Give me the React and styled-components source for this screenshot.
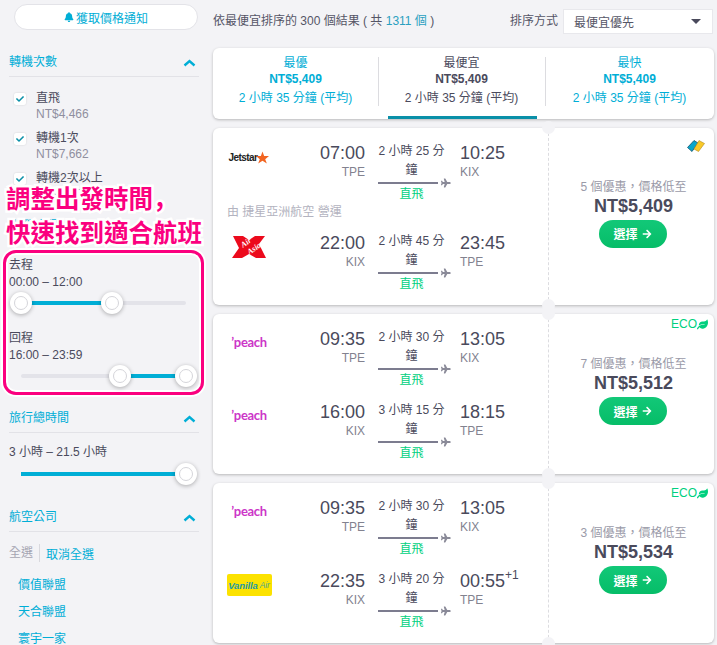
import React from 'react';
import styled, { createGlobalStyle } from 'styled-components';
import { FaBell, FaCheck, FaArrowRight, FaLeaf, FaPlane } from 'react-icons/fa';

const Global = createGlobalStyle`
  html, body { margin: 0; padding: 0; background: #f3f3f6; }
  body { font-family: "Liberation Sans", "Noto Sans CJK TC", sans-serif; font-size: 12px; color: #4a4a5c; }
  #root { height: 645px; overflow: hidden; }
`;

const BLUE = '#00aed6';
const PINK = '#fb007f';
const Page = styled.div`display: flex; position: relative; height: 645px; overflow: hidden; background: #f3f3f6;`;
const Sidebar = styled.aside`width: 190px; margin-left: 9px; padding-top: 4px; flex: none;`;
const AlertButton = styled.div`
  margin-left: 5px; width: 182px; height: 24px; border: 1px solid #e3e3e8; border-radius: 13px; background: #fff;
  color: ${BLUE}; display: flex; align-items: center; justify-content: center; gap: 2px; font-size: 12px;
  svg { width: 10px; height: 10px; }
`;
const SectionHead = styled.div`
  height: 28px; margin-top: ${p => p.$mt}px; border-bottom: 1px solid #e2e2e7; color: ${BLUE}; display: flex;
  justify-content: space-between; font-size: 12px; line-height: 29px; padding-right: 3px;
`;
const Chevron = () => (
  <svg width="13" height="8" viewBox="0 0 13 8" style={{ marginTop: 11 }}>
    <path d="M1.5 6.5 L6.5 2 L11.5 6.5" fill="none" stroke={BLUE} strokeWidth="2.4" />
  </svg>
);
const StopList = styled.div`padding-top: 11px;`;
const StopItem = styled.div`height: 40px; display: flex; padding-left: 5px; line-height: 17px;`;
const CheckBox = styled.span`
  width: 12px; height: 12px; margin: 5px 10px 0 0; background: #fff; border-radius: 2px; color: #0a90a8; flex: none;
  display: flex; align-items: center; justify-content: center; box-shadow: 0 0 2px rgba(0,0,0,.15);
  svg { width: 8px; height: 8px; }
`;
const StopLabel = styled.div`font-size: 12px; color: #4a4a5c; margin-top: 2px;`;
const Muted = styled.div`color: #8f8f9f; font-size: 12px; margin-top: -1px;`;
const Highlight = styled.div`
  margin: 9px -5px 0 -6px; border: 3px solid ${PINK}; border-radius: 13px; padding: 2px 0 5px 3px;
  box-shadow: 0 0 0 2px #fff, inset 0 0 0 2px #fff;
`;
const SliderLabel = styled.div`line-height: 17px; font-size: 12px; color: #4a4a5c; margin-top: ${p => p.$mt || 0}px;`;
const SliderTitle = styled.div`line-height: 17px; font-size: 12px; color: #4a4a5c; margin-top: ${p => p.$mt || 2}px; margin-bottom: -2px;`;
const SliderWrap = styled.div`
  position: relative; height: 22px; width: 165px; margin: ${p => p.$mt}px 0 0 12px;
`;
const Track = styled.div`position: absolute; left: 0; right: 0; top: 9px; height: 4px; background: #e3e3e9; border-radius: 2px;`;
const Fill = styled.div`
  position: absolute; top: 9px; height: 4px; background: ${BLUE}; left: ${p => p.$from}%; width: ${p => p.$to - p.$from}%;
`;
const Knob = styled.div`
  position: absolute; top: 0; left: ${p => p.$at}%; width: 22px; height: 22px; margin-left: -11px; border-radius: 50%; background: #fff;
  box-shadow: 0 1px 4px rgba(0,0,0,.3); display: flex; align-items: center; justify-content: center;
  &::after { content: ""; width: 14px; height: 14px; border: 1px solid #d5d5da; border-radius: 50%; box-sizing: border-box; }
`;
const Slider = ({ from, to, single, mt = 2 }) => (
  <SliderWrap $mt={mt}>
    <Track /><Fill $from={from} $to={to} />
    {!single && <Knob $at={from} />}<Knob $at={to} />
  </SliderWrap>
);
const AirlineTools = styled.div`display: flex; align-items: center; margin-top: 12px; font-size: 12px; color: ${BLUE};`;
const SelectAll = styled.span`color: #a5a5b2; padding-right: 6px; margin-right: 6px; border-right: 1px solid #d9d9de; line-height: 18px;`;
const AllianceList = styled.div`margin-top: 10px;`;
const AllianceLink = styled.div`color: ${BLUE}; font-size: 12px; padding-left: 9px; line-height: 27px;`;
const Overlay = styled.div`
  position: absolute; left: 6px; top: 181px; font-size: 24.5px; line-height: 34px; font-weight: 700; color: ${PINK}; white-space: nowrap;
  -webkit-text-stroke: 5px #fff; paint-order: stroke fill;
`;
const LowComma = styled.span`font-family: "Noto Sans CJK SC", sans-serif;`;

const Main = styled.main`width: 501px; margin-left: 14px; flex: none;`;
const TopBar = styled.div`height: 48px; display: flex; align-items: flex-start;`;
const ResultCount = styled.div`margin-top: 13px; line-height: 17px; width: 297px; white-space: nowrap; color: #555566;`;
const Accent = styled.span`color: #2a9fc0;`;
const SortLabel = styled.div`margin-top: 13px; line-height: 17px; width: 53px; white-space: nowrap; color: #555566;`;
const Select = styled.div`
  margin-top: 9px; width: 150px; height: 25px; background: #fff; border: 1px solid #e8e8ec; box-sizing: border-box;
  display: flex; align-items: center; justify-content: space-between; padding: 0 11px 0 10px; color: #555566;
  &::after { content: ""; border: 5px solid transparent; border-top: 5px solid #4a4a5c; border-bottom: 0; }
`;
const Tabs = styled.div`
  display: grid; grid-template-columns: 165px 167px 1fr; height: 71px; background: #fff; border-radius: 6px; box-shadow: 0 1px 3px rgba(0,0,0,.25);
`;
const Tab = styled.div`
  position: relative; text-align: center; color: ${p => (p.$active ? '#4a4a5c' : BLUE)}; padding-top: 7px;
  &::before { content: ""; display: ${p => (p.$divider ? 'block' : 'none')}; position: absolute; left: 0; top: 9px; height: 49px; width: 1px; background: #dcdce0; }
  &::after { content: ""; display: ${p => (p.$active ? 'block' : 'none')}; position: absolute; left: 10px; right: 8px; bottom: 0; height: 3px; background: #0a90a8; }
`;
const TabLine = styled.div`line-height: ${p => p.$lh}px; font-weight: ${p => (p.$bold ? 700 : 400)};`;

const Card = styled.section`
  display: flex; height: ${p => p.$h}px; margin-top: 9px; background: #fff; border-radius: 6px; box-shadow: 0 1px 3px rgba(0,0,0,.25);
`;
const LegsPane = styled.div`flex: none; width: 335px; padding: 14px 0 0 14px; box-sizing: border-box;`;
const PricePane = styled.div`
  flex: 1; position: relative; border-left: 1px dashed #dcdce0; display: flex; flex-direction: column; align-items: center; justify-content: center; padding: 0 0 8px 4px;
  &::before, &::after { content: ""; position: absolute; left: -7px; width: 13px; height: 13px; border-radius: 50%; background: #f3f3f6; }
  &::before { top: -7px; } &::after { bottom: -7px; }
`;
const Leg = styled.div`display: flex; height: 60px; margin-bottom: ${p => p.$mb || 0}px;`;
const LogoCell = styled.div`width: 44px; height: 30px; margin-right: 34px; display: flex; align-items: center; justify-content: center; flex: none;`;
const TimeCol = styled.div`width: ${p => p.$w}px; flex: none; text-align: ${p => p.$align};`;
const Time = styled.div`font-size: 18px; line-height: 22px; color: #4a4a5c; white-space: nowrap;`;
const Plus = styled.sup`font-size: 12px; line-height: 0; position: relative; top: -1px;`;
const Airport = styled.div`font-size: 12px; line-height: 17px; color: #82828f;`;
const DurationCol = styled.div`width: 73px; margin: 0 9px 0 13px; flex: none;`;
const DurationText = styled.div`width: 67px; text-align: center; font-size: 12px; line-height: 19px; color: #4a4a5c;`;
const LineRow = styled.div`display: flex; align-items: center; height: 8px; margin-top: -1px; color: #8a8a98; svg { width: 10px; height: 10px; margin-left: 3px; }`;
const Line = styled.div`width: 61px; height: 2px; background: #7c7c8f;`;
const Direct = styled.div`width: 67px; text-align: center; color: #00d07e; font-size: 12px; line-height: 15px;`;
const Operated = styled.div`color: #b3b3c0; font-size: 12px; line-height: 18px; margin: 1px 0 11px;`;
const Offer = styled.div`font-size: 12px; line-height: 17px; color: #9a9aa8; margin-top: 1px;`;
const Price = styled.div`font-size: 18px; font-weight: 700; line-height: 20px; color: #4a4a5c;`;
const SelectButton = styled.div`
  width: 68px; height: 28px; margin-top: 4px; margin-left: -2px; border-radius: 14px; background: linear-gradient(#12c878, #06bd68); color: #fff; font-weight: 700; font-size: 12px;
  display: flex; align-items: center; justify-content: center; gap: 4px; svg { width: 10px; height: 10px; }
`;
const Eco = styled.div`
  position: absolute; top: 3px; right: 6px; color: #00d07e; font-size: 12px; line-height: 14px; display: flex; align-items: center;
  svg { width: 11px; height: 11px; }
`;
const TicketMark = styled.svg`position: absolute; top: 12px; right: 9px; width: 18px; height: 12px;`;

const JetstarMark = styled.div`display: flex; align-items: center; font-weight: 700; font-size: 10px; letter-spacing: -.55px; color: #222; svg { width: 13px; height: 13px; margin-left: -1px; }`;
const Jetstar = () => (
  <JetstarMark>Jetstar
    <svg viewBox="0 0 24 24"><path d="M12 1l3 8h9l-7 6 3 8-8-5-8 5 3-8-7-6h9z" fill="#f26522" /></svg>
  </JetstarMark>
);
const AsiaMark = styled.div`position: relative; width: 34px; height: 22px;`;
const AsiaWord = styled.span`
  position: absolute; left: ${p => p.$x}px; top: ${p => p.$y}px; color: #fff; font-family: "Liberation Serif", serif; font-style: italic; font-weight: 700;
  font-size: 8px; line-height: 8px; transform: rotate(-35deg); white-space: nowrap;
`;
const AirAsia = () => (
  <AsiaMark>
    <svg width="34" height="22" viewBox="0 0 34 22">
      <path d="M1 0H11L17 4L23 0H33L27 8L34 22H24L17 18L10 22H0L7 12Z" fill="#ec0a1c" />
    </svg>
    <AsiaWord $x={9} $y={3}>Air</AsiaWord>
    <AsiaWord $x={15} $y={9}>Asia</AsiaWord>
  </AsiaMark>
);
const Peach = styled.div`color: #cc36c8; font-family: "Lato", sans-serif; font-weight: 700; font-size: 13px; letter-spacing: -.35px; line-height: 14px; margin-bottom: 2px;`;
const Vanilla = styled.div`
  width: 45px; height: 22px; background: #fce200; border-radius: 2px; color: #1f9aa5; font-style: italic; font-family: "Liberation Sans", sans-serif; font-weight: 700;
  font-size: 9.5px; letter-spacing: -.1px; display: flex; align-items: center; justify-content: center; white-space: nowrap; flex: none;
`;
const VanillaAir = styled.span`font-size: 8.5px; font-weight: 400; color: #4fa98a; margin-left: 2px;`;

const logos = {
  jetstar: <Jetstar />, asia: <AirAsia />, peach: <Peach>’peach</Peach>,
  vanilla: <Vanilla>Vanilla<VanillaAir>Air</VanillaAir></Vanilla>,
};

const Flight = ({ logo, dep, from, dur, arr, to, plus, mb }) => (
  <Leg $mb={mb}>
    <LogoCell>{logos[logo]}</LogoCell>
    <TimeCol $w={60} $align="right"><Time>{dep}</Time><Airport>{from}</Airport></TimeCol>
    <DurationCol>
      <DurationText>{dur} 鐘</DurationText>
      <LineRow><Line /><FaPlane /></LineRow>
      <Direct>直飛</Direct>
    </DurationCol>
    <TimeCol $w={70} $align="left"><Time>{arr}{plus && <Plus>+1</Plus>}</Time><Airport>{to}</Airport></TimeCol>
  </Leg>
);

const Ticket = () => (
  <TicketMark viewBox="0 0 18 12">
    <path d="M0.5 7.5L7 0.5L11 3L5 11.5Z" fill="#08a6cc" stroke="#17506a" strokeWidth=".8" />
    <path d="M7 9L12 0.5L17.5 3.5L11.5 11.5Z" fill="#f9c928" stroke="#b08a20" strokeWidth=".6" />
  </TicketMark>
);

const cards = [
  { h: 177, offers: 5, price: 'NT$5,409', ticket: true, legs: [
    { logo: 'jetstar', dep: '07:00', from: 'TPE', dur: '2 小時 25 分', arr: '10:25', to: 'KIX' },
    { note: '由 捷星亞洲航空 營運' },
    { logo: 'asia', dep: '22:00', from: 'KIX', dur: '2 小時 45 分', arr: '23:45', to: 'TPE' },
  ] },
  { h: 160, offers: 7, price: 'NT$5,512', eco: true, legs: [
    { logo: 'peach', dep: '09:35', from: 'TPE', dur: '2 小時 30 分', arr: '13:05', to: 'KIX', mb: 13 },
    { logo: 'peach', dep: '16:00', from: 'KIX', dur: '3 小時 15 分', arr: '18:15', to: 'TPE' },
  ] },
  { h: 160, offers: 3, price: 'NT$5,534', eco: true, legs: [
    { logo: 'peach', dep: '09:35', from: 'TPE', dur: '2 小時 30 分', arr: '13:05', to: 'KIX', mb: 13 },
    { logo: 'vanilla', dep: '22:35', from: 'KIX', dur: '3 小時 20 分', arr: '00:55', to: 'TPE', plus: true },
  ] },
];

const tabs = [['最優', false, false], ['最便宜', true, true], ['最快', false, true]];

export default function App() {
  return (
    <Page>
      <Global />
      <Sidebar>
        <AlertButton><FaBell />獲取價格通知</AlertButton>
        <SectionHead $mt={18}>轉機次數<Chevron /></SectionHead>
        <StopList>
          {[['直飛', 'NT$4,466'], ['轉機1次', 'NT$7,662'], ['轉機2次以上', 'NT$8,120']].map(([l, p]) => (
            <StopItem key={l}>
              <CheckBox><FaCheck /></CheckBox>
              <div><StopLabel>{l}</StopLabel><Muted>{p}</Muted></div>
            </StopItem>
          ))}
        </StopList>
        <SectionHead $mt={4}>出發時間<Chevron /></SectionHead>
        <Highlight>
          <SliderTitle>去程</SliderTitle>
          <SliderLabel $mt={2}>00:00 – 12:00</SliderLabel>
          <Slider from={0} to={55} mt={1} />
          <SliderTitle $mt={16}>回程</SliderTitle>
          <SliderLabel $mt={2}>16:00 – 23:59</SliderLabel>
          <Slider from={60} to={100} mt={1} />
        </Highlight>
        <SectionHead $mt={9}>旅行總時間<Chevron /></SectionHead>
        <SliderLabel $mt={11}>3 小時 – 21.5 小時</SliderLabel>
        <Slider from={0} to={100} single mt={2} />
        <SectionHead $mt={18}>航空公司<Chevron /></SectionHead>
        <AirlineTools><SelectAll>全選</SelectAll>取消全選</AirlineTools>
        <AllianceList>
          {['價值聯盟', '天合聯盟', '寰宇一家'].map(a => <AllianceLink key={a}>{a}</AllianceLink>)}
        </AllianceList>
      </Sidebar>
      <Overlay>調整出發時間<LowComma>，</LowComma><br />快速找到適合航班</Overlay>
      <Main>
        <TopBar>
          <ResultCount>依最便宜排序的 300 個結果 ( 共 <Accent>1311 個</Accent> )</ResultCount>
          <SortLabel>排序方式</SortLabel>
          <Select>最便宜優先</Select>
        </TopBar>
        <Tabs>
          {tabs.map(([t, active, divider]) => (
            <Tab key={t} $active={active} $divider={divider}>
              <TabLine $lh={16}>{t}</TabLine>
              <TabLine $lh={16} $bold>NT$5,409</TabLine>
              <TabLine $lh={22}>2 小時 35 分鐘 (平均)</TabLine>
            </Tab>
          ))}
        </Tabs>
        {cards.map((c, i) => (
          <Card key={i} $h={c.h}>
            <LegsPane>
              {c.legs.map((l, j) => (l.note ? <Operated key={j}>{l.note}</Operated> : <Flight key={j} {...l} />))}
            </LegsPane>
            <PricePane>
              {c.ticket && <Ticket />}
              {c.eco && <Eco>ECO<FaLeaf /></Eco>}
              <Offer>{c.offers} 個優惠，價格低至</Offer>
              <Price>{c.price}</Price>
              <SelectButton>選擇<FaArrowRight /></SelectButton>
            </PricePane>
          </Card>
        ))}
      </Main>
    </Page>
  );
}
